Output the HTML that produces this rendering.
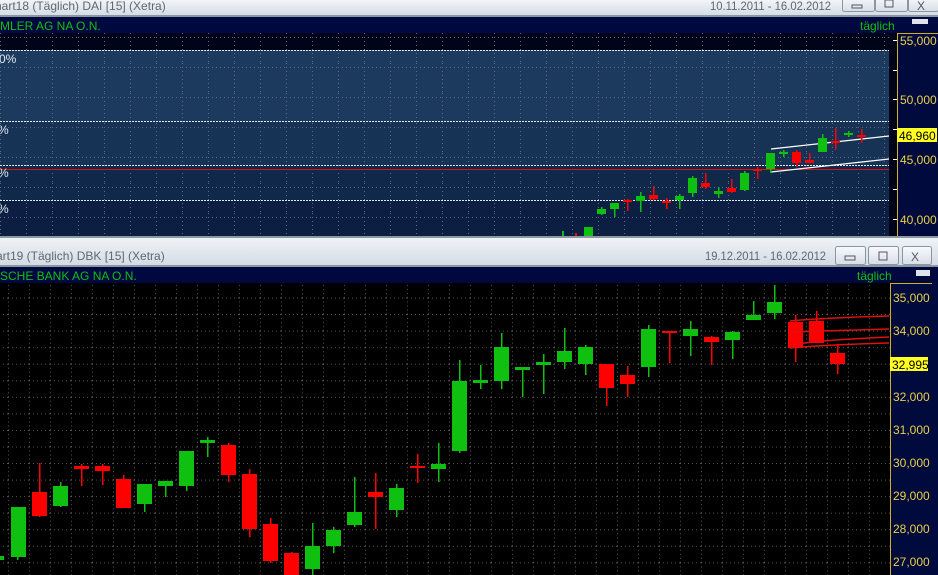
<!DOCTYPE html>
<html><head><meta charset="utf-8"><style>
html,body{margin:0;padding:0;background:#000;width:938px;height:575px;overflow:hidden}
svg{display:block}
text{font-family:"Liberation Sans Narrow","Liberation Sans",sans-serif}
</style></head><body>
<svg width="938" height="575" xmlns="http://www.w3.org/2000/svg">
<defs>
<linearGradient id="tb" x1="0" y1="0" x2="0" y2="1"><stop offset="0" stop-color="#f2f5f8"/><stop offset="1" stop-color="#d3dbe3"/></linearGradient>
<linearGradient id="bt" x1="0" y1="0" x2="0" y2="1"><stop offset="0" stop-color="#f8fafc"/><stop offset="1" stop-color="#d8dee6"/></linearGradient>
<pattern id="ug" x="0" y="33" width="26" height="30" patternUnits="userSpaceOnUse"><line x1="0.5" y1="0" x2="0.5" y2="30" stroke="#5a6a80" stroke-dasharray="1,3"/><line x1="0" y1="4.5" x2="26" y2="4.5" stroke="#5a6a80" stroke-dasharray="1,3"/></pattern>
<pattern id="lg" x="8" y="281" width="21" height="16.55" patternUnits="userSpaceOnUse"><line x1="0.5" y1="0" x2="0.5" y2="17" stroke="#555" stroke-dasharray="1,3"/><line x1="0" y1="0.5" x2="21" y2="0.5" stroke="#555" stroke-dasharray="1,3"/></pattern>
</defs>
<rect x="0" y="0" width="938" height="16" fill="url(#tb)"/>
<rect x="0" y="15" width="938" height="2" fill="#8a96a2"/>
<text x="-5" y="10" font-size="12" fill="#606870">hart18 (Täglich)  DAI [15] (Xetra)</text>
<text x="710" y="10" font-size="12" fill="#606870" textLength="121" lengthAdjust="spacingAndGlyphs">10.11.2011 - 16.02.2012</text>
<g fill="url(#bt)" stroke="#8a96a2"><rect x="842.5" y="-3.5" width="32" height="15" rx="2"/><rect x="875.5" y="-3.5" width="32" height="15" rx="2"/><rect x="908.5" y="-3.5" width="30" height="15" rx="2"/></g>
<rect x="852" y="5" width="10" height="3" fill="none" stroke="#556" stroke-width="1"/>
<rect x="885" y="0" width="8" height="7" fill="none" stroke="#556"/>
<text x="917" y="10" font-size="12" fill="#556">X</text>
<rect x="0" y="17" width="938" height="16" fill="#000840"/>
<text x="0" y="30" font-size="12" fill="#10c010">MLER AG NA O.N.</text>
<text x="860" y="30" font-size="12" fill="#10c010">täglich</text>
<rect x="912" y="19" width="16" height="5" fill="#e0e4e8"/>
<rect x="0" y="33" width="890" height="203" fill="#000418"/>
<rect x="0" y="50" width="890" height="71" fill="#1b3a5e"/>
<rect x="0" y="121" width="890" height="44" fill="#163255"/>
<rect x="0" y="165" width="890" height="35" fill="#10284a"/>
<rect x="0" y="200" width="890" height="36" fill="#0c1e42"/>
<rect x="0" y="33" width="890" height="203" fill="url(#ug)"/>
<g stroke="#e0e8f0" stroke-dasharray="2,1"><line x1="0" y1="50.5" x2="890" y2="50.5"/><line x1="0" y1="121.5" x2="890" y2="121.5"/><line x1="0" y1="165.5" x2="890" y2="165.5"/><line x1="0" y1="200.5" x2="890" y2="200.5"/></g>
<line x1="0" y1="169.5" x2="896" y2="169.5" stroke="#e01010"/>
<g font-size="12" fill="#e0e8f0"><text x="-1" y="63">0%</text><text x="-2" y="134">%</text><text x="-2" y="177">%</text><text x="-2" y="213">%</text></g>
<rect x="889" y="33" width="8" height="203" fill="#000418"/>
<g stroke="#fff" stroke-width="1.3"><line x1="771" y1="149" x2="889" y2="136"/><line x1="771" y1="172" x2="889" y2="159"/></g>
<g>
<rect x="562" y="231" width="2" height="5" fill="#10c010"/>
<rect x="575" y="233" width="2" height="3" fill="#f00"/>
<rect x="584" y="227" width="9" height="9" fill="#10c010"/>
<g fill="#10c010">
<rect x="601" y="207" width="1.5" height="8"/><rect x="597" y="209" width="9" height="5"/>
<rect x="614" y="203" width="1.5" height="14"/><rect x="610" y="203" width="9" height="6"/>
<rect x="640" y="192" width="1.5" height="20"/><rect x="636" y="196" width="9" height="5"/>
<rect x="679" y="194" width="1.5" height="15"/><rect x="675" y="196" width="9" height="4"/>
<rect x="692" y="176" width="1.5" height="21"/><rect x="688" y="178" width="9" height="15"/>
<rect x="718" y="187" width="1.5" height="11"/><rect x="714" y="191" width="9" height="3"/>
<rect x="744" y="171" width="1.5" height="20"/><rect x="740" y="173" width="9" height="17"/>
<rect x="770" y="153" width="1.5" height="20"/><rect x="766" y="153" width="9" height="16"/>
<rect x="783" y="150" width="1.5" height="7"/><rect x="779" y="152" width="9" height="2"/>
<rect x="822" y="134" width="1.5" height="18"/><rect x="818" y="138" width="9" height="14"/>
<rect x="848" y="131" width="1.5" height="6"/><rect x="844" y="133" width="9" height="2"/>
</g>
<g fill="#f00">
<rect x="627" y="199" width="1.5" height="12"/><rect x="623" y="200" width="9" height="2"/>
<rect x="653" y="186" width="1.5" height="14"/><rect x="649" y="195" width="9" height="4"/>
<rect x="666" y="198" width="1.5" height="11"/><rect x="662" y="201" width="9" height="2"/>
<rect x="705" y="173" width="1.5" height="16"/><rect x="701" y="183" width="9" height="4"/>
<rect x="731" y="179" width="1.5" height="14"/><rect x="727" y="188" width="9" height="4"/>
<rect x="757" y="167" width="1.5" height="12"/><rect x="753" y="169" width="9" height="2"/>
<rect x="796" y="150" width="1.5" height="17"/><rect x="792" y="152" width="9" height="11"/>
<rect x="809" y="153" width="1.5" height="10"/><rect x="805" y="160" width="9" height="3"/>
<rect x="835" y="128" width="1.5" height="22"/><rect x="831" y="141" width="9" height="2"/>
<rect x="861" y="129" width="1.5" height="14"/><rect x="857" y="135" width="9" height="2"/>
</g>
</g>
<rect x="897" y="33" width="41" height="203" fill="#000a3c"/>
<line x1="897.5" y1="33" x2="897.5" y2="236" stroke="#d0b020"/>
<line x1="897" y1="33.5" x2="938" y2="33.5" stroke="#d0b020"/>
<g stroke="#fff"><line x1="893" y1="40.5" x2="897" y2="40.5"/><line x1="893" y1="70.5" x2="897" y2="70.5"/><line x1="893" y1="99.5" x2="897" y2="99.5"/><line x1="893" y1="129.5" x2="897" y2="129.5"/><line x1="893" y1="159.5" x2="897" y2="159.5"/><line x1="893" y1="189.5" x2="897" y2="189.5"/><line x1="893" y1="219.5" x2="897" y2="219.5"/></g>
<g font-size="12" fill="#e8d048"><text x="900" y="45">55,000</text><text x="900" y="104">50,000</text><text x="900" y="164">45,000</text><text x="900" y="224">40,000</text></g>
<rect x="897" y="128" width="40" height="14" fill="#ffff20"/>
<text x="899" y="140" font-size="12" fill="#000">46,960</text>
<rect x="0" y="236" width="938" height="30" fill="url(#tb)"/>
<rect x="0" y="236" width="938" height="2" fill="#8a96a2"/>
<rect x="0" y="265" width="938" height="2" fill="#8a96a2"/>
<text x="-4" y="260" font-size="12" fill="#606870">art19 (Täglich)  DBK [15] (Xetra)</text>
<text x="705" y="260" font-size="12" fill="#606870" textLength="121" lengthAdjust="spacingAndGlyphs">19.12.2011 - 16.02.2012</text>
<g fill="url(#bt)" stroke="#8a96a2"><rect x="835.5" y="246.5" width="30" height="18" rx="2"/><rect x="868.5" y="246.5" width="30" height="18" rx="2"/><rect x="902.5" y="246.5" width="29" height="18" rx="2"/></g>
<rect x="845" y="256" width="10" height="4" fill="none" stroke="#556"/>
<rect x="879" y="252" width="8" height="8" fill="none" stroke="#556"/>
<text x="911" y="261" font-size="12" fill="#556">X</text>
<rect x="0" y="267" width="938" height="16" fill="#000840"/>
<text x="0" y="280" font-size="12" fill="#10c010">SCHE BANK AG NA O.N.</text>
<text x="857" y="280" font-size="12" fill="#10c010">täglich</text>
<rect x="916" y="270" width="14" height="6" fill="#e0e4e8"/>
<rect x="0" y="283" width="890" height="292" fill="#000"/>
<rect x="0" y="283" width="890" height="292" fill="url(#lg)"/>
<g fill="#10c010">
<rect x="0" y="556" width="4" height="4"/>
<rect x="17" y="507" width="1.5" height="53"/><rect x="11" y="507" width="15" height="50"/>
<rect x="60" y="482" width="1.5" height="25"/><rect x="53" y="486" width="15" height="20"/>
<rect x="144" y="484" width="1.5" height="28"/><rect x="137" y="484" width="15" height="20"/>
<rect x="165" y="481" width="1.5" height="16"/><rect x="158" y="481" width="15" height="5"/>
<rect x="186" y="451" width="1.5" height="40"/><rect x="179" y="451" width="15" height="35"/>
<rect x="207" y="437" width="1.5" height="20"/><rect x="200" y="440" width="15" height="3"/>
<rect x="312" y="523" width="1.5" height="52"/><rect x="305" y="546" width="15" height="23"/>
<rect x="333" y="527" width="1.5" height="26"/><rect x="326" y="530" width="15" height="16"/>
<rect x="354" y="477" width="1.5" height="50"/><rect x="347" y="512" width="15" height="13"/>
<rect x="396" y="484" width="1.5" height="33"/><rect x="389" y="488" width="15" height="22"/>
<rect x="438" y="443" width="1.5" height="39"/><rect x="431" y="464" width="15" height="5"/>
<rect x="459" y="360" width="1.5" height="93"/><rect x="452" y="381" width="15" height="70"/>
<rect x="480" y="365" width="1.5" height="24"/><rect x="473" y="380" width="15" height="3"/>
<rect x="501" y="333" width="1.5" height="56"/><rect x="494" y="347" width="15" height="34"/>
<rect x="522" y="367" width="1.5" height="30"/><rect x="515" y="367" width="15" height="3"/>
<rect x="543" y="354" width="1.5" height="40"/><rect x="536" y="362" width="15" height="3"/>
<rect x="564" y="328" width="1.5" height="41"/><rect x="557" y="351" width="15" height="11"/>
<rect x="585" y="345" width="1.5" height="30"/><rect x="578" y="347" width="15" height="17"/>
<rect x="648" y="325" width="1.5" height="52"/><rect x="641" y="329" width="15" height="38"/>
<rect x="690" y="321" width="1.5" height="35"/><rect x="683" y="329" width="15" height="7"/>
<rect x="732" y="331" width="1.5" height="28"/><rect x="725" y="332" width="15" height="8"/>
<rect x="753" y="301" width="1.5" height="19"/><rect x="746" y="315" width="15" height="5"/>
<rect x="774" y="285" width="1.5" height="34"/><rect x="767" y="302" width="15" height="11"/>
</g>
<g fill="#f00">
<rect x="39" y="463" width="1.5" height="54"/><rect x="32" y="492" width="15" height="24"/>
<rect x="81" y="464" width="1.5" height="22"/><rect x="74" y="466" width="15" height="3"/>
<rect x="102" y="464" width="1.5" height="21"/><rect x="95" y="466" width="15" height="5"/>
<rect x="123" y="475" width="1.5" height="33"/><rect x="116" y="479" width="15" height="29"/>
<rect x="228" y="443" width="1.5" height="39"/><rect x="221" y="445" width="15" height="30"/>
<rect x="249" y="469" width="1.5" height="68"/><rect x="242" y="474" width="15" height="55"/>
<rect x="270" y="518" width="1.5" height="45"/><rect x="263" y="524" width="15" height="37"/>
<rect x="291" y="552" width="1.5" height="23"/><rect x="284" y="553" width="15" height="22"/>
<rect x="375" y="473" width="1.5" height="56"/><rect x="368" y="492" width="15" height="5"/>
<rect x="417" y="454" width="1.5" height="29"/><rect x="410" y="466" width="15" height="2"/>
<rect x="606" y="364" width="1.5" height="42"/><rect x="599" y="364" width="15" height="24"/>
<rect x="627" y="366" width="1.5" height="31"/><rect x="620" y="375" width="15" height="9"/>
<rect x="669" y="331" width="1.5" height="32"/><rect x="662" y="331" width="15" height="2"/>
<rect x="711" y="336" width="1.5" height="29"/><rect x="704" y="337" width="15" height="5"/>
<rect x="795" y="315" width="1.5" height="47"/><rect x="788" y="322" width="15" height="26"/>
<rect x="816" y="311" width="1.5" height="32"/><rect x="809" y="321" width="15" height="22"/>
<rect x="837" y="344" width="1.5" height="30"/><rect x="830" y="353" width="15" height="11"/>
</g>
<g stroke="#e01010" stroke-width="1.5" fill="none">
<path d="M790 321 Q820 318 889 316"/><path d="M790 332 Q820 331 889 329"/><path d="M790 345 Q820 340 889 337"/><path d="M790 348 Q820 345 889 343"/>
</g>
<rect x="890" y="283" width="48" height="292" fill="#000a3c"/>
<line x1="890.5" y1="283" x2="890.5" y2="575" stroke="#d0b020"/>
<line x1="890" y1="283.5" x2="932" y2="283.5" stroke="#d0b020"/>
<g font-size="12" fill="#e8d048"><text x="893" y="302">35,000</text><text x="893" y="335">34,000</text><text x="893" y="401">32,000</text><text x="893" y="434">31,000</text><text x="893" y="467">30,000</text><text x="893" y="500">29,000</text><text x="893" y="533">28,000</text><text x="893" y="566">27,000</text></g>
<rect x="890" y="357" width="38" height="14" fill="#ffff20"/>
<text x="892" y="369" font-size="12" fill="#000">32,995</text>
<rect x="932" y="283" width="6" height="292" fill="#000a3c"/>
</svg>
</body></html>
